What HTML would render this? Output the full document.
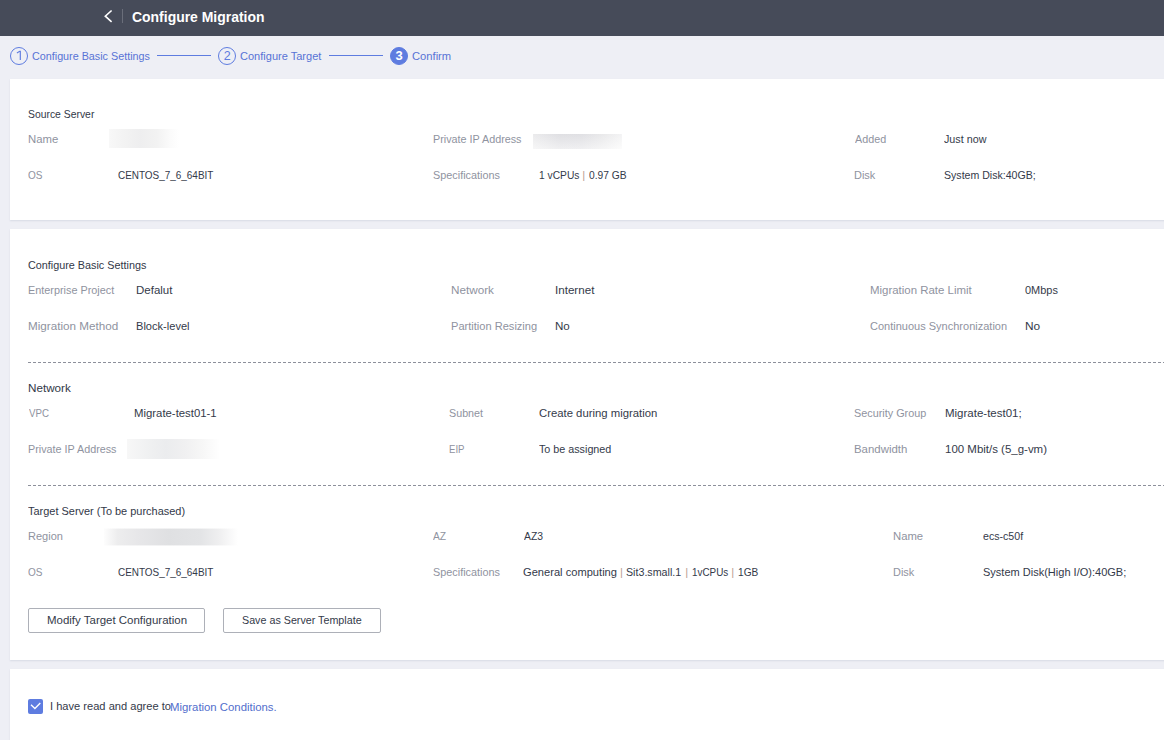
<!DOCTYPE html>
<html>
<head>
<meta charset="utf-8">
<title>Configure Migration</title>
<style>
*{box-sizing:border-box;margin:0;padding:0}
html,body{width:1164px;height:740px;overflow:hidden}
body{position:relative;background:#eeeff5;font-family:"Liberation Sans",sans-serif;font-size:11.5px;color:#343a4a}
.hdr{position:absolute;left:0;top:0;width:1164px;height:36px;background:#464b59}
.hdr .sep{position:absolute;left:122px;top:9px;width:1px;height:14px;background:#6a6e7a}
.hdr .ttl{position:absolute;left:131.5px;top:8px;line-height:18px;font-size:15.5px;transform:scaleX(.9);font-weight:bold;color:#fff;white-space:nowrap;transform-origin:0 50%}
.hdr svg{position:absolute;left:102px;top:9px}
.circ{position:absolute;top:47px;width:18px;height:18px;border-radius:50%;border:1px solid #5e7ce0;color:#5e7ce0;text-align:center;line-height:16px;font-size:12.5px;text-indent:.4px}
.circ.on{background:#5e7ce0;color:#fff;font-weight:bold;font-size:13px}
.ln{position:absolute;top:55px;height:1px;background:#5e7ce0}
.card{position:absolute;left:10px;width:1160px;background:#fff;box-shadow:0 1px 1.5px rgba(196,199,214,.5)}
.t{position:absolute;white-space:nowrap;line-height:16px;height:16px;transform-origin:0 50%}
.l{color:#8f93a0}
.h{color:#323848}
.s{color:#5873d6}
.a{color:#526ecc}
.p{color:#bd9f94}
.dash{position:absolute;left:28px;width:1140px;height:1px;background:repeating-linear-gradient(90deg,#8d909b 0,#8d909b 3px,transparent 3px,transparent 5px)}
.blur{position:absolute}
.btn{position:absolute;top:608px;height:25px;border:1px solid #adb0b8;border-radius:2px;background:#fff}
.cb{position:absolute;left:28px;top:699px;width:15px;height:15px;border-radius:2px;background:#5e7ce0}
.cb svg{position:absolute;left:0;top:0}
</style>
</head>
<body>
<div class="hdr">
  <svg width="12" height="16" viewBox="0 0 12 16"><path d="M9.6 1.5 L3.3 7.2 L9.6 12.9" fill="none" stroke="#fff" stroke-width="1.6"/></svg>
  <div class="sep"></div>
  <div class="ttl">Configure Migration</div>
</div>

<!-- steps -->
<div class="circ" style="left:10px"><svg width="16" height="16" viewBox="0 0 16 16" style="position:absolute;left:0;top:0"><path d="M5.9 4.9 L8.7 3.3 L9.3 3.3 L9.3 11.9" fill="none" stroke="#5e7ce0" stroke-width="1.15" stroke-linejoin="miter"/></svg></div>
<div class="ln" style="left:157px;width:54px"></div>
<div class="circ" style="left:218px">2</div>
<div class="ln" style="left:329px;width:54px"></div>
<div class="circ on" style="left:390px">3</div>

<!-- cards -->
<div class="card" style="top:79px;height:141px"></div>
<div class="card" style="top:229px;height:431px"></div>
<div class="card" style="top:669px;height:80px"></div>

<div class="dash" style="top:362px"></div>
<div class="dash" style="top:485px"></div>

<div class="btn" style="left:28px;width:177px"></div>
<div class="btn" style="left:223px;width:158px"></div>

<div class="cb"><svg width="15" height="15" viewBox="0 0 15 15"><path d="M3 5.8 L6.9 9.5 L12.3 4" fill="none" stroke="#fff" stroke-width="1.35"/></svg></div>

<!-- text -->
<div class="t h" style="left:28.05px;top:106px;transform:scaleX(0.9025)">Source Server</div>
<div class="t l" style="left:27.66px;top:131px;transform:scaleX(0.9858)">Name</div>
<div class="t l" style="left:432.51px;top:131px;transform:scaleX(0.9375)">Private IP Address</div>
<div class="t l" style="left:854.72px;top:131px;transform:scaleX(0.9367)">Added</div>
<div class="t" style="left:944.42px;top:131px;transform:scaleX(0.9347)">Just now</div>
<div class="t l" style="left:28.21px;top:167px;transform:scaleX(0.8726)">OS</div>
<div class="t" style="left:118.29px;top:167px;transform:scaleX(0.8639)">CENTOS_7_6_64BIT</div>
<div class="t l" style="left:432.82px;top:167px;transform:scaleX(0.9436)">Specifications</div>
<div class="t" style="left:538.95px;top:167px;transform:scaleX(0.8907)">1 vCPUs</div>
<div class="t p" style="left:582.3px;top:167px">|</div>
<div class="t" style="left:588.78px;top:167px;transform:scaleX(0.8906)">0.97 GB</div>
<div class="t l" style="left:853.9px;top:167px;transform:scaleX(0.9533)">Disk</div>
<div class="t" style="left:944.03px;top:167px;transform:scaleX(0.9196)">System Disk:40GB;</div>
<div class="t h" style="left:28.15px;top:257px;transform:scaleX(0.9394)">Configure Basic Settings</div>
<div class="t l" style="left:27.71px;top:282px;transform:scaleX(0.9433)">Enterprise Project</div>
<div class="t" style="left:135.95px;top:282px;transform:scaleX(0.9992)">Defalut</div>
<div class="t l" style="left:450.63px;top:282px;transform:scaleX(1.0176)">Network</div>
<div class="t" style="left:554.8px;top:282px;transform:scaleX(1.0099)">Internet</div>
<div class="t l" style="left:869.86px;top:282px;transform:scaleX(0.9948)">Migration Rate Limit</div>
<div class="t" style="left:1025.26px;top:282px;transform:scaleX(0.9522)">0Mbps</div>
<div class="t l" style="left:27.63px;top:318px;transform:scaleX(1.0157)">Migration Method</div>
<div class="t" style="left:135.99px;top:318px;transform:scaleX(0.9628)">Block-level</div>
<div class="t l" style="left:450.69px;top:318px;transform:scaleX(0.9627)">Partition Resizing</div>
<div class="t" style="left:554.84px;top:318px;transform:scaleX(1.0083)">No</div>
<div class="t l" style="left:870.34px;top:318px;transform:scaleX(0.9572)">Continuous Synchronization</div>
<div class="t" style="left:1024.62px;top:318px;transform:scaleX(1.0309)">No</div>
<div class="t h" style="left:27.63px;top:380px;transform:scaleX(1.0151)">Network</div>
<div class="t l" style="left:28.51px;top:405px;transform:scaleX(0.8461)">VPC</div>
<div class="t" style="left:133.86px;top:405px;transform:scaleX(0.9876)">Migrate-test01-1</div>
<div class="t l" style="left:449.32px;top:405px;transform:scaleX(0.9340)">Subnet</div>
<div class="t" style="left:539.13px;top:405px;transform:scaleX(0.9843)">Create during migration</div>
<div class="t l" style="left:854.22px;top:405px;transform:scaleX(0.9426)">Security Group</div>
<div class="t" style="left:944.85px;top:405px;transform:scaleX(0.9991)">Migrate-test01;</div>
<div class="t l" style="left:27.71px;top:441px;transform:scaleX(0.9375)">Private IP Address</div>
<div class="t l" style="left:449.11px;top:441px;transform:scaleX(0.8378)">EIP</div>
<div class="t" style="left:539.32px;top:441px;transform:scaleX(0.9344)">To be assigned</div>
<div class="t l" style="left:853.86px;top:441px;transform:scaleX(0.9931)">Bandwidth</div>
<div class="t" style="left:944.73px;top:441px;transform:scaleX(0.9974)">100 Mbit/s (5_g-vm)</div>
<div class="t h" style="left:28.31px;top:503px;transform:scaleX(0.9523)">Target Server (To be purchased)</div>
<div class="t l" style="left:27.69px;top:528px;transform:scaleX(0.9583)">Region</div>
<div class="t l" style="left:433.33px;top:528px;transform:scaleX(0.8929)">AZ</div>
<div class="t" style="left:523.73px;top:528px;transform:scaleX(0.9001)">AZ3</div>
<div class="t l" style="left:892.97px;top:528px;transform:scaleX(0.9824)">Name</div>
<div class="t" style="left:983.23px;top:528px;transform:scaleX(0.9235)">ecs-c50f</div>
<div class="t l" style="left:28.21px;top:564px;transform:scaleX(0.8726)">OS</div>
<div class="t" style="left:118.29px;top:564px;transform:scaleX(0.8639)">CENTOS_7_6_64BIT</div>
<div class="t l" style="left:432.82px;top:564px;transform:scaleX(0.9436)">Specifications</div>
<div class="t" style="left:523.34px;top:564px;transform:scaleX(0.9671)">General computing</div>
<div class="t p" style="left:620.1px;top:564px">|</div>
<div class="t" style="left:626.33px;top:564px;transform:scaleX(0.9288)">Sit3.small.1</div>
<div class="t p" style="left:685.2px;top:564px">|</div>
<div class="t" style="left:691.69px;top:564px;transform:scaleX(0.8606)">1vCPUs</div>
<div class="t p" style="left:731.2px;top:564px">|</div>
<div class="t" style="left:737.66px;top:564px;transform:scaleX(0.8814)">1GB</div>
<div class="t l" style="left:893px;top:564px;transform:scaleX(0.9533)">Disk</div>
<div class="t" style="left:983.01px;top:564px;transform:scaleX(0.9579)">System Disk(High I/O):40GB;</div>
<div class="t" style="left:46.95px;top:612px;transform:scaleX(0.9974)">Modify Target Configuration</div>
<div class="t" style="left:242.13px;top:612px;transform:scaleX(0.9326)">Save as Server Template</div>
<div class="t" style="left:49.65px;top:698px;transform:scaleX(0.9653)">I have read and agree to</div>
<div class="t a" style="left:170.26px;top:698.5px;transform:scaleX(0.9868)">Migration Conditions.</div>
<div class="t s" style="left:32.15px;top:48px;transform:scaleX(0.9362)">Configure Basic Settings</div>
<div class="t s" style="left:240.14px;top:48px;transform:scaleX(0.9594)">Configure Target</div>
<div class="t s" style="left:412.13px;top:48px;transform:scaleX(0.9731)">Confirm</div>

<!-- blurred (redacted) values -->
<div class="blur" style="left:109px;top:129px;width:70px;height:19px;background:linear-gradient(90deg,#f8f8f8 0%,#f3f3f3 20%,#eeeeef 45%,#f2f2f2 68%,#fbfbfb 88%,#fff 100%)"></div>
<div class="blur" style="left:533px;top:134px;width:89px;height:15px;background:linear-gradient(180deg,rgba(60,60,80,.035),rgba(255,255,255,.4)),linear-gradient(90deg,#f1f1f2 0%,#e5e5e8 30%,#e6e6e9 55%,#efeff0 78%,#fafafa 100%)"></div>
<div class="blur" style="left:127px;top:439px;width:93px;height:20px;background:linear-gradient(90deg,#f7f7f7 0%,#eff0f1 25%,#ebecee 42%,#f0f0f1 62%,#f7f7f7 82%,#fff 100%)"></div>
<div class="blur" style="left:104px;top:528px;width:134px;height:18px;background:linear-gradient(180deg,rgba(255,255,255,.85) 0,rgba(255,255,255,0) 1.5px,rgba(255,255,255,0) calc(100% - 1.5px),rgba(255,255,255,.85) 100%),linear-gradient(90deg,#fdfdfd 0%,#ededee 10%,#e7e7e9 25%,#dfe0e2 48%,#e3e4e6 72%,#efeff0 86%,#fff 100%)"></div>
</body>
</html>
